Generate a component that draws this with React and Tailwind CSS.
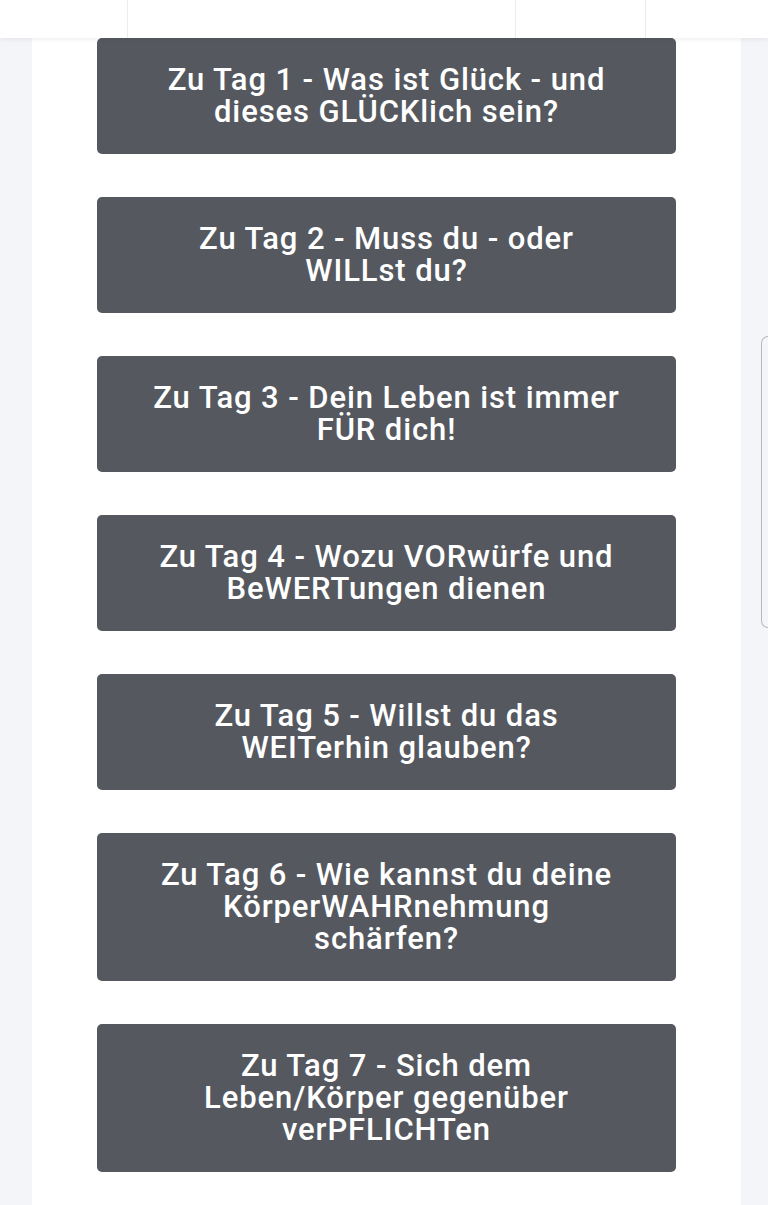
const days = [
  ['Zu Tag 1 - Was ist Glück - und', 'dieses GLÜCKlich sein?'],
  ['Zu Tag 2 - Muss du - oder', 'WILLst du?'],
  ['Zu Tag 3 - Dein Leben ist immer', 'FÜR dich!'],
  ['Zu Tag 4 - Wozu VORwürfe und', 'BeWERTungen dienen'],
  ['Zu Tag 5 - Willst du das', 'WEITerhin glauben?'],
  ['Zu Tag 6 - Wie kannst du deine', 'KörperWAHRnehmung', 'schärfen?'],
  ['Zu Tag 7 - Sich dem', 'Leben/Körper gegenüber', 'verPFLICHTen'],
];

export default function App() {
  return (
    <div className="relative min-h-[1205px] bg-[#f3f5f9]" style={{ fontFamily: 'Roboto, "Noto Sans", sans-serif' }}>
      {/* Top bar */}
      <div className="relative z-10 flex h-[38px] bg-white shadow-[0_2px_4px_rgba(0,0,0,0.06)]">
        <div className="w-[128px] border-r border-[#ececec]"></div>
        <div className="w-[388px] border-r border-[#ececec]"></div>
        <div className="w-[130px] border-r border-[#ececec]"></div>
        <div className="flex-1"></div>
      </div>

      {/* Content column */}
      <div className="ml-[32px] mr-[27px] min-h-[1167px] bg-white px-[65px] pb-[33px]">
        <div className="flex flex-col gap-[43px]">
          {days.map((lines) => (
            <a
              key={lines[0]}
              href="#"
              className="block rounded-[5px] bg-[#55595f] px-[20px] py-[26px] text-center text-[31px] font-medium leading-[32px] tracking-[0.9px] text-white"
            >
              {lines.map((l) => (
                <span key={l} className="block whitespace-nowrap">
                  {l}
                </span>
              ))}
            </a>
          ))}
        </div>
      </div>

      {/* side scroll handle */}
      <div className="absolute right-0 top-[336px] h-[292px] w-[7px] rounded-l-[8px] border border-r-0 border-[#b9b9b9] bg-[#f3f5f9]"></div>
    </div>
  );
}
